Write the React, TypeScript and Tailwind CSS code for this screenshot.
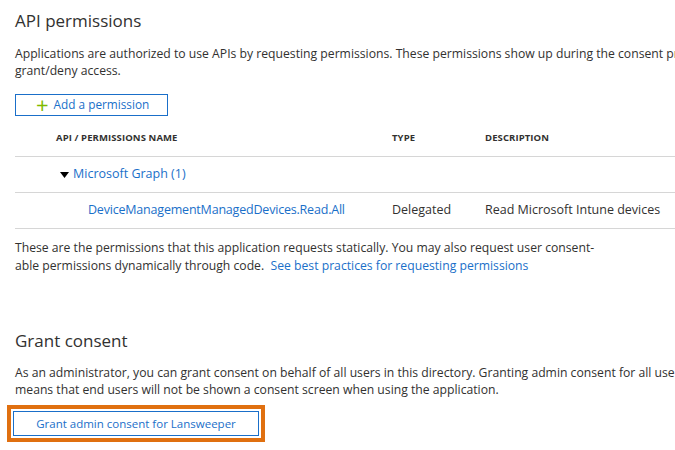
import React from "react";

export default function App() {
  const font = { fontFamily: '"Open Sans", "Noto Sans", Arial, sans-serif' };
  return (
    <div className="w-[675px] h-[450px] overflow-hidden bg-white text-[#323130]" style={font}>
      <div className="w-[900px] pl-[15px]">
        <h1 className="text-[17px] leading-[28px] font-normal mt-[7px] text-[#323130]">API permissions</h1>
        <p className="text-[12.2px] leading-[17px] mt-[10px] whitespace-nowrap">
          Applications are authorized to use APIs by requesting permissions. These permissions show up during the consent process where users are given the opportunity to
          <br />
          grant/deny access.
        </p>
        <button className="mt-[15px] flex items-center h-[22px] w-[153px] border border-[#1a6fc9] pl-[20px] text-[11.8px] text-[#1a6fc9]">
          <span className="text-[#7fba00] text-[22px] leading-none mr-[5px] font-normal -mt-[2px]">+</span>
          Add a permission
        </button>
        <div className="mt-[5px] w-[885px]">
          <div className="grid grid-cols-[377px_93px_1fr] h-[36px] items-center border-b border-[#d6d6d6] text-[9.5px] font-bold tracking-[0.1px]">
            <div className="pl-[41px]">API / PERMISSIONS NAME</div>
            <div>TYPE</div>
            <div>DESCRIPTION</div>
          </div>
          <div className="grid grid-cols-[377px_93px_1fr] h-[36px] items-center border-b border-[#d6d6d6] text-[12.5px]">
            <div className="pl-[45px] flex items-center text-[#1a6fc9]">
              <svg width="9" height="6" viewBox="0 0 9 6" className="mr-[4px]">
                <path d="M0 0H9L4.5 6Z" fill="#000" />
              </svg>
              Microsoft Graph (1)
            </div>
            <div></div>
            <div></div>
          </div>
          <div className="grid grid-cols-[377px_93px_1fr] h-[36px] items-center border-b border-[#d6d6d6] text-[12.5px]">
            <div className="pl-[73px] text-[#1a6fc9] tracking-[-0.2px]">DeviceManagementManagedDevices.Read.All</div>
            <div>Delegated</div>
            <div>Read Microsoft Intune devices</div>
          </div>
        </div>
        <p className="text-[12.2px] leading-[18px] mt-[10px] whitespace-nowrap">
          These are the permissions that this application requests statically. You may also request user consent-
          <br />
          able permissions dynamically through code.{"\u00a0\u00a0"}
          <span className="text-[#1a6fc9]">See best practices for requesting permissions</span>
        </p>
        <h2 className="text-[17px] leading-[28px] font-normal mt-[52px]">Grant consent</h2>
        <p className="text-[12.2px] leading-[17px] mt-[9px] whitespace-nowrap">
          As an administrator, you can grant consent on behalf of all users in this directory. Granting admin consent for all users
          <br />
          means that end users will not be shown a consent screen when using the application.
        </p>
        <div className="mt-[7px] -ml-[8px] w-[258px] border-[4px] border-[#e07010] p-[2px]">
          <button className="w-full h-[25px] border border-[#1a6fc9] text-[11.5px] font-medium text-[#1a6fc9] flex items-center justify-center">
            Grant admin consent for Lansweeper
          </button>
        </div>
      </div>
    </div>
  );
}
